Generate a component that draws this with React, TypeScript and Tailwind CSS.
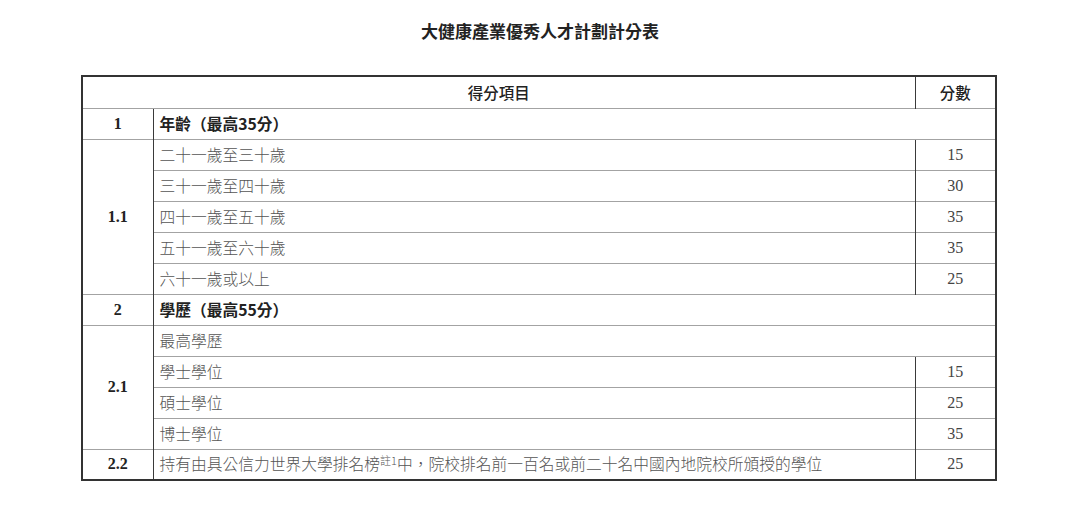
const cjk = "font-['Noto_Sans_CJK_TC','Noto_Sans_CJK_SC',sans-serif]";
const serif = "font-['Liberation_Serif','Noto_Sans_CJK_TC',serif]";

const line = "border-t border-[#a3a3a3]";
const vline = "border-l border-l-[#3a3a3a]";

type Item = { text: React.ReactNode; score: number };

const ages: Item[] = [
  { text: "二十一歲至三十歲", score: 15 },
  { text: "三十一歲至四十歲", score: 30 },
  { text: "四十一歲至五十歲", score: 35 },
  { text: "五十一歲至六十歲", score: 35 },
  { text: "六十一歲或以上", score: 25 },
];

const degrees: Item[] = [
  { text: "學士學位", score: 15 },
  { text: "碩士學位", score: 25 },
  { text: "博士學位", score: 35 },
];

function NumCell({ label, rowSpan }: { label: string; rowSpan?: number }) {
  return (
    <td
      rowSpan={rowSpan}
      className={`${line} ${serif} text-center align-middle text-[16px] font-bold text-[#222]`}
    >
      {label}
    </td>
  );
}

function TextCell({ children, colSpan, bold }: { children: React.ReactNode; colSpan?: number; bold?: boolean }) {
  return (
    <td
      colSpan={colSpan}
      className={`${line} ${vline} ${cjk} pl-[6px] text-left align-middle text-[15.75px] ${
        bold ? "font-bold text-[#222]" : "font-light text-[#555]"
      }`}
    >
      {children}
    </td>
  );
}

function ScoreCell({ score }: { score: number }) {
  return (
    <td className={`${line} ${vline} ${serif} text-center align-middle text-[16px] text-[#444]`}>{score}</td>
  );
}

export default function App() {
  return (
    <div className="min-h-[518px] w-[1080px] bg-white pt-[19px]" lang="zh-Hant">
      <h1 className={`${cjk} text-center text-[17px] leading-[24px] font-bold text-[#222]`}>
        大健康產業優秀人才計劃計分表
      </h1>

      <table className="mt-[32px] ml-[81px] w-[914px] table-fixed border-collapse border-2 border-[#333]">
        <colgroup>
          <col className="w-[71px]" />
          <col className="w-[762px]" />
          <col className="w-[81px]" />
        </colgroup>
        <tbody>
          <tr className="h-[32px]">
            <td colSpan={2} className={`${cjk} text-center align-middle text-[15.5px] font-medium text-[#222]`}>
              得分項目
            </td>
            <td className={`${vline} ${cjk} text-center align-middle text-[15.5px] font-medium text-[#222]`}>
              分數
            </td>
          </tr>

          <tr className="h-[31px]">
            <NumCell label="1" />
            <TextCell colSpan={2} bold>
              年齡（最高35分）
            </TextCell>
          </tr>
          {ages.map((a, i) => (
            <tr key={i} className="h-[31px]">
              {i === 0 && <NumCell label="1.1" rowSpan={ages.length} />}
              <TextCell>{a.text}</TextCell>
              <ScoreCell score={a.score} />
            </tr>
          ))}

          <tr className="h-[31px]">
            <NumCell label="2" />
            <TextCell colSpan={2} bold>
              學歷（最高55分）
            </TextCell>
          </tr>
          <tr className="h-[31px]">
            <NumCell label="2.1" rowSpan={degrees.length + 1} />
            <TextCell colSpan={2}>最高學歷</TextCell>
          </tr>
          {degrees.map((d, i) => (
            <tr key={i} className="h-[31px]">
              <TextCell>{d.text}</TextCell>
              <ScoreCell score={d.score} />
            </tr>
          ))}

          <tr className="h-[31px]">
            <NumCell label="2.2" />
            <TextCell>
              持有由具公信力世界大學排名榜<sup className="text-[11px]">註1</sup>中，院校排名前一百名或前二十名中國內地院校所頒授的學位
            </TextCell>
            <ScoreCell score={25} />
          </tr>
        </tbody>
      </table>
    </div>
  );
}
